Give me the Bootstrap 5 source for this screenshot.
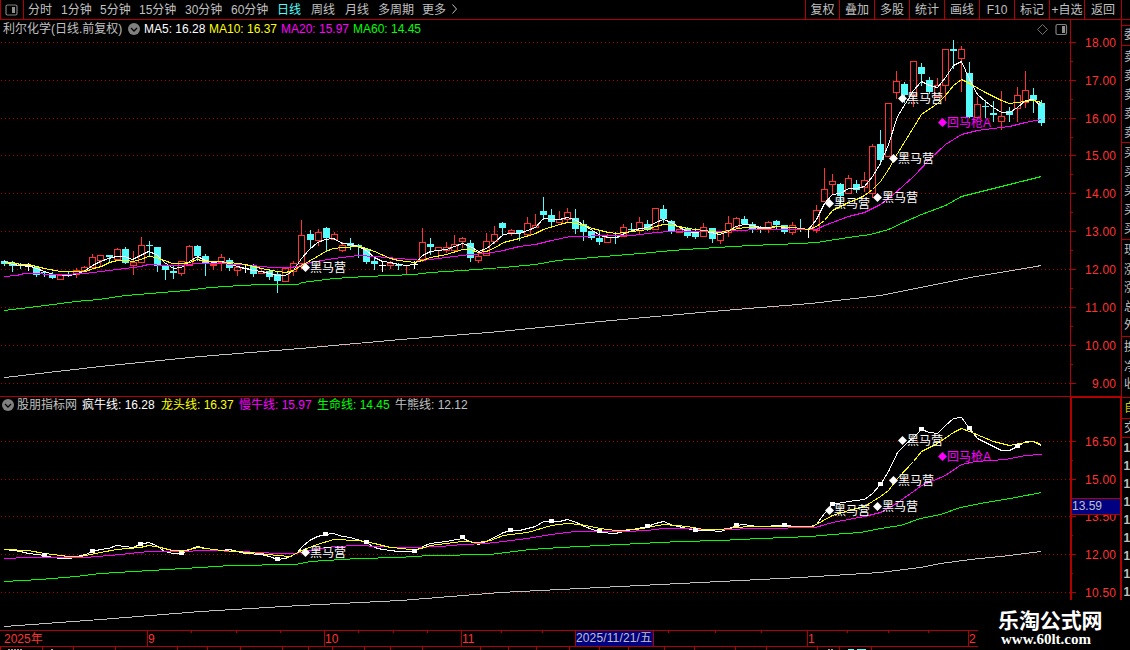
<!DOCTYPE html>
<html lang="zh-CN">
<head>
<meta charset="utf-8">
<title>利尔化学</title>
<link rel="stylesheet" href="https://cdn.jsdelivr.net/npm/bootstrap@5.3.0/dist/css/bootstrap.min.css">
<script src="https://cdn.jsdelivr.net/npm/bootstrap@5.3.0/dist/js/bootstrap.bundle.min.js"></script>
<style>
html,body{height:100%;overflow:hidden}
body{background:#000;color:#c0c0c0;font:12px/18px "Liberation Sans","Noto Sans CJK SC",sans-serif;width:1130px;height:650px}
.topbar{height:20px;border-bottom:1px solid #b00000;line-height:20px}
.panel-btn{width:24px;height:19px;border:1px solid #b00000;border-width:0 1px 0 1px}
.periods{padding-left:4px}
.p33{width:33px}.p34{width:34px}.p39{width:39px}.p44{width:44px}.p46{width:46px}.p30{width:30px}
.picked{color:#54fcfc}
.tool{width:35px;height:19px;border-left:1px solid #b00000;text-align:center}
.tool-first{width:34px}
.tool-last{width:37px}
.edge{width:9px;border-left:1px solid #b00000}
.stage{height:630px}
.legend-row{left:0;height:18px;z-index:2}
.legend-main{top:0}
.legend-sub{top:376px}
.c-w{color:#fff}.c-y{color:#ff0}.c-m{color:#f0f}.c-g{color:#0f0}
.n122{width:128px;padding-left:3px}.n16{width:16px}
.w65{width:65px}.w72{width:72px}.w78{width:78px}.w79{width:79px}
.s17{width:17px}.n65{width:65px}
svg{display:block}
svg text{font-family:"Liberation Sans","Noto Sans CJK SC",sans-serif;font-size:12px}
.brand{left:978px;top:580px;width:152px;height:50px;background:#000;color:#fff;padding:8px 0 0 20px}
.brand-name{font:700 21px/22px "Noto Sans CJK SC",sans-serif;letter-spacing:-.1px}
.brand-url{font:700 15px/18px "Liberation Serif",serif;padding-left:3px}
</style>
</head>
<body>
<header class="topbar d-flex text-nowrap">
  <div class="panel-btn d-flex align-items-center justify-content-center">
    <svg width="14" height="12" viewBox="0 0 14 12"><rect x="1" y="1" width="11" height="10" rx="1.5" fill="none" stroke="#808080" stroke-width="1.2"/><rect x="7" y="3" width="3" height="6" fill="#909090"/></svg>
  </div>
  <nav class="periods d-flex flex-grow-1">
    <span class="p33">分时</span><span class="p39">1分钟</span><span class="p39">5分钟</span><span class="p46">15分钟</span><span class="p46">30分钟</span><span class="p46">60分钟</span><span class="p34 picked">日线</span><span class="p34">周线</span><span class="p33">月线</span><span class="p44">多周期</span><span class="p30">更多</span>
    <svg width="6" height="18"><path d="M.5 4.5l4 4.5l-4 4.5" fill="none" stroke="#c0c0c0"/></svg>
  </nav>
  <span class="tool tool-first">复权</span><span class="tool">叠加</span><span class="tool">多股</span><span class="tool">统计</span><span class="tool">画线</span><span class="tool">F10</span><span class="tool">标记</span><span class="tool">+自选</span><span class="tool tool-last">返回</span><span class="edge"></span>
</header>
<main class="stage position-relative">
  <div class="legend-row legend-main position-absolute d-flex text-nowrap">
    <span class="n122">利尔化学(日线.前复权)</span>
    <span class="n16"><svg width="13" height="18"><circle cx="6" cy="9" r="6" fill="#808080"/><path d="M3 8l3 3l3-3" fill="none" stroke="#000" stroke-width="1.3"/></svg></span>
    <span class="w65 c-w">MA5: 16.28</span><span class="w72 c-y">MA10: 16.37</span><span class="w72 c-m">MA20: 15.97</span><span class="w72 c-g">MA60: 14.45</span>
  </div>
  <div class="legend-row legend-sub position-absolute d-flex text-nowrap">
    <span class="s17"><svg width="16" height="18"><circle cx="8" cy="9" r="6" fill="#808080"/><path d="M5 8l3 3l3-3" fill="none" stroke="#000" stroke-width="1.3"/></svg></span>
    <span class="n65">股朋指标网</span>
    <span class="w79 c-w">疯牛线: 16.28</span><span class="w78 c-y">龙头线: 16.37</span><span class="w78 c-m">慢牛线: 15.97</span><span class="w78 c-g">生命线: 14.45</span><span class="w78">牛熊线: 12.12</span>
  </div>
  <svg id="chart" width="1130" height="630" viewBox="0 20 1130 630"></svg>
  <div class="brand position-absolute text-nowrap">
    <div class="brand-name">乐淘公式网</div>
    <div class="brand-url">www.60lt.com</div>
  </div>
</main>
<script>
// Each candle: kind, wick top, body top, body bottom, wick bottom
const candles = `c260,261,264,265|c261,263,266,271|c263,265,266,268|w263,266,266,270|c267,267,275,276|c271,272,273,276|c272,274,278,278|r275,275,279,279|c272,275,276,276|r268,270,274,277
r266,267,270,270|r254,257,267,267|r255,255,260,265|c255,255,257,261|r248,249,259,259|c247,249,263,263|r251,262,265,274|r237,245,262,262|c241,245,246,255|c247,247,266,271
c265,266,270,279|c266,271,273,278|r261,261,273,275|r245,246,265,265|c245,246,256,260|c254,256,264,275|r262,264,265,269|r254,257,262,270|c258,260,268,270|r266,267,270,275
w264,268,268,272|c264,265,274,276|r268,271,273,273|c270,271,277,279|c272,274,281,292|r268,268,281,281|r261,263,271,275|r220,235,263,268|c230,234,240,247|r229,232,240,245
c227,228,238,251|r232,234,239,239|r242,245,250,251|c238,243,246,249|c244,245,247,257|c249,249,262,263|c257,261,264,269|w261,265,265,271|r261,263,265,268|c263,265,266,269
r265,265,265,274|w261,264,264,268|r228,242,259,261|c238,244,247,254|r247,247,250,258|r242,247,250,252|r235,244,250,252|r237,238,241,247|c240,243,258,261|r253,256,260,262
r233,241,255,255|r226,234,241,243|c222,223,228,235|r229,230,232,235|c230,230,233,240|r217,223,234,235|r214,225,227,227|c197,211,215,219|c209,215,222,226|r211,219,222,222
r208,212,219,221|c209,218,229,233|c220,224,232,240|c231,231,238,239|c231,238,242,244|r234,237,242,242|c232,237,238,243|r224,227,236,236|c223,229,230,231|r217,222,230,233
c220,224,230,230|r208,208,229,229|c205,209,219,222|c220,221,231,233|r229,229,232,232|c227,229,236,237|c228,231,237,238|r223,227,236,236|c228,228,239,242|r232,232,240,243
r216,223,232,236|r217,218,227,227|c216,219,224,224|c222,224,230,232|c226,227,229,232|r221,222,229,232|c220,221,225,229|c225,225,232,233|r222,225,232,234|c219,228,230,231
w228,229,229,237|r205,210,230,232|r168,189,201,201|r174,181,184,193|c183,184,196,203|r175,178,193,193|c180,184,190,192|r172,180,187,191|r144,146,193,197|c130,144,160,164
r103,103,156,156|r71,81,92,98|c82,84,95,102|r61,61,95,106|c63,67,74,85|c77,80,92,93|r78,85,96,96|r49,49,85,100|c40,49,51,68|r46,49,58,91
c62,73,117,117|r97,104,117,117|c100,106,107,117|c101,113,115,121|r91,116,121,129|c107,111,115,121|r87,95,108,121|r71,90,102,107|c88,95,100,112|c100,103,123,125`.split(/[|\n]/);

const lines = {
 '#fff': ['4,261 12,264 20,265 28,265 36,268 44,271 53,274 69,275 77,273 85,270 92,265 100,261 108,258 116,256 124,256 132,259 140,255 148,251 156,254 164,262 173,268 181,267 189,261 197,256 205,260 213,262 221,261 229,263 237,266 245,268 253,270 261,271 269,273 277,275 285,275 293,270 301,258 309,249 317,242 325,239 333,238 342,243 350,244 358,246 366,250 374,257 382,261 390,262 398,264 406,265 414,264 422,255 430,251 438,250 446,249 454,246 462,243 470,246 478,251 486,248 495,241 503,234 511,233 519,233 527,230 535,227 543,218 551,219 559,219 567,217 576,220 584,225 592,230 600,235 608,237 616,237 624,233 632,230 640,228 647,227 655,222 663,219 671,222 679,227 687,231 695,232 703,231 711,232 719,234 728,231 735,226 744,224 752,225 760,227 768,227 776,226 784,227 792,227 800,228 808,229 816,219 824,203 832,194 840,193 848,188 856,188 864,186 872,176 880,163 888,144 897,116 905,103 913,90 921,81 929,85 937,87 945,77 953,65 961,61 969,79 977,94 985,101 993,107 1001,112 1009,112 1017,107 1025,100 1033,99 1041,106',
 '4,549 12,550 20,551 28,553 36,554 44,555 53,557 61,558 69,558 77,556 85,554 92,551 100,549 108,548 116,545 124,546 132,547 140,544 148,542 156,545 164,551 173,553 181,553 189,549 197,546 205,548 221,550 229,549 237,551 245,553 261,554 269,556 277,559 285,558 296,553 302,546 309,540 317,536 325,534 333,533 342,536 350,537 366,542 374,547 382,549 398,551 414,551 422,546 430,543 446,541 462,538 470,541 478,544 486,541 503,532 511,530 519,530 535,526 543,521 559,521 567,519 576,522 584,526 592,529 600,532 615,533 623,531 632,529 647,526 655,523 663,521 673,525 687,528 695,530 708,530 720,531 737,525 743,524 757,526 784,525 808,527 816,524 824,513 832,504 848,501 864,499 872,493 880,484 888,471 897,452 905,444 913,437 921,429 929,432 937,433 945,425 953,418 961,417 969,428 977,438 985,442 993,446 1001,450 1009,450 1017,446 1025,441 1033,441 1041,445'],
 '#f0f': ['4,276 16,275 24,273 60,274 85,273 100,271 125,268 140,266 148,264 165,265 181,265 197,263 213,263 240,264 262,266 270,267 290,267 302,265 310,262 333,258 358,255 374,256 398,258 422,260 438,258 470,254 486,253 503,250 519,246 535,244 551,240 570,236 611,235 632,235 655,232 671,231 720,231 735,230 760,229 816,229 824,225 832,222 848,216 864,212 880,204 893,194 913,176 929,159 945,144 961,134 977,130 993,128 1009,126 1025,122 1041,119',
 '4,558 28,557 85,557 120,554 148,551 180,551 205,550 240,551 278,553 295,553 310,550 333,546 358,545 398,547 414,547 440,546 462,544 485,543 503,541 527,538 551,534 575,531 625,531 647,530 663,528 720,529 760,528 815,527 832,522 848,519 864,516 880,512 893,505 913,491 921,485 945,475 961,464 975,461 1005,459 1025,455 1041,454'],
 '#ff0': ['4,262 12,262 20,264 28,264 36,266 44,268 60,271 85,271 93,268 101,266 109,262 117,260 125,260 133,261 140,259 148,256 156,257 164,260 172,263 181,263 189,262 197,259 205,261 213,261 229,262 245,264 261,268 277,271 285,272 293,270 301,265 317,256 325,251 333,248 342,247 358,246 366,248 374,251 390,258 398,260 414,262 422,260 430,257 446,254 462,249 470,249 478,252 486,251 495,247 503,242 511,240 519,238 535,233 543,229 559,224 567,222 576,223 584,225 592,228 608,232 616,233 632,231 647,229 655,226 663,224 679,226 687,228 695,229 711,231 719,232 728,230 744,227 768,228 776,226 792,227 808,229 816,226 824,220 832,210 840,206 848,202 856,199 864,195 872,189 880,181 888,169 897,153 913,127 921,114 937,103 945,95 953,85 961,79 969,83 985,92 1001,100 1009,103 1025,101 1033,100 1041,102',
 '4,549 28,550 44,553 68,556 80,556 100,552 116,549 140,547 148,545 160,547 172,550 185,550 197,547 221,550 250,552 277,555 290,556 301,550 317,544 333,539 358,540 374,543 390,547 403,548 414,550 430,545 446,543 462,541 478,542 490,540 503,535 527,532 551,525 567,523 580,524 600,528 615,530 636,529 647,527 663,524 687,526 703,529 720,529 735,527 751,526 805,526 812,526 832,515 848,510 864,506 880,496 888,490 897,478 913,461 921,451 937,443 953,432 961,428 969,431 993,441 1009,445 1025,442 1033,441 1041,444'],
 '#0f0': ['4,310 20,308 45,305 75,301 98,299 125,295 150,293 185,290 210,287 240,285 262,284 297,284 302,282 333,278 366,276 414,274 430,272 462,270 503,267 535,264 557,260 592,257 615,255 640,253 672,250 700,248 750,245 800,243 816,242 848,237 870,234 888,229 905,221 921,214 945,205 961,196 977,192 1001,186 1041,176',
 '4,581 40,579 75,576 100,573 150,570 200,567 230,565 295,564 310,561 358,558 398,557 430,555 490,554 530,549 560,547 600,545 640,543 680,541 720,540 760,538 810,536 832,534 860,532 880,528 900,525 920,518 940,514 960,507 985,502 1010,498 1041,492'],
 '#c0c0c0': ['4,377 100,366 200,356 300,348 400,339 500,331 600,321 700,312 760,307 810,303 880,295 920,287 970,277 1041,265',
 '4,626 100,619 200,611 300,605 400,600 500,592 600,587 700,582 800,577 880,572 920,567 940,563 970,559 1000,556 1041,551']
};
const R = '#b00000';
let s = '';
const box = (x,y,w,h,f) => s += `<rect x="${x}" y="${y}" width="${w}" height="${h}" fill="${f}" shape-rendering="crispEdges"/>`;
const txt = (x,y,t,f,extra='') => s += `<text x="${x}" y="${y}" fill="${f}" ${extra}>${t}</text>`;

// price grids and their scale
const scaleMain = [42,80,118,155,193,231,269,307,345,383], scaleSub = [441,479,516,554,592];
const price = (y,v) => { const t = v.toFixed(2); txt(t.length > 4 ? 1085 : 1092, y+5, t, '#ff3232', `textLength="${t.length > 4 ? 31 : 24}"`); };
[...scaleMain,...scaleSub].forEach(y => {
  s += `<path d="M1 ${y+.5}H1070" stroke="${R}" stroke-dasharray="1 3" shape-rendering="crispEdges"/>`;
  box(1071,y,5,1,R);
});
scaleMain.forEach((y,i) => { if (i<9) box(1071,y+19,2,1,R); price(y,18-i); });
scaleSub.forEach((y,i) => { if (i<4) box(1071,y+19,2,1,R); price(y,16.5-i*1.5); });

// candles
candles.forEach((d,i) => {
  const [h,t,b,l] = d.slice(1).split(',').map(Number), x = Math.round(4 + i*8.04), k = d[0];
  if (k === 'r') {
    box(x,h,1,Math.max(t-h,0),'#ff3232'); box(x,b,1,l-b+1,'#ff3232');
    if (b > t) s += `<rect x="${x-2.5}" y="${t+.5}" width="6" height="${b-t}" fill="none" stroke="#ff3232" shape-rendering="crispEdges"/>`;
    else box(x-3,t,7,1,'#ff3232');
  } else {
    const f = k === 'c' ? '#54fcfc' : '#fff';
    box(x,h,1,l-h+1,f); box(x-3,t,7,Math.max(b-t,1),f);
  }
});
for (const c in lines) lines[c].forEach(p =>
  s += `<polyline points="${p}" transform="translate(.5 .5)" fill="none" stroke="${c}" shape-rendering="crispEdges"/>`);
[[44,555],[92,551],[140,544],[181,553],[277,559],[325,534],[366,542],[414,551],[462,537],[510,530],[551,521],[599,531],[647,526],[695,530],[736,525],[784,525],[832,504],[880,484],[921,429],[969,428],[1017,446]].forEach(([x,y]) => box(x-2,y-2,5,4,'#fff'));

// signal marks
const mark = (x,y,t,f) => { s += `<path d="M${x-4} ${y+.5}l4.5-4.5l4.5 4.5l-4.5 4.5z" fill="${f}"/>`; txt(x+5,y+5,t,f); };
[[305,267],[829,203],[877,197],[893,158],[902,98],[305,552],[829,510],[877,506],[893,480],[902,440]].forEach(([x,y]) => mark(x,y,'黑马营','#fff'));
mark(942,122,'回马枪A','#f0f'); mark(942,456,'回马枪A','#f0f');

// frames
box(0,396,1121,1,R); box(1070,20,1,377,R); box(1121,20,1,580,R);
box(1070,397,2,203,R); box(1120,397,2,203,R); box(1070,397,52,1,R);
box(1072,498,48,16,'#000080'); box(1071,498,50,1,R); box(1071,514,50,1,R);
txt(1072,510,'13.59','#c0c0c0','textLength="30"');
[25,45,142,239,336,397,418,437].forEach(y => box(1121,y,9,1,R));

// quote panel, cut by the window edge
[['委',35],['卖',57],['卖',76],['卖',95],['卖',114],['卖',133],['买',153],['买',172],['买',191],['买',210],['买',229],['现',250],['涨',270],['涨',288],['总',307],['外',325],['换',347],['净',367],['收',384],['交',428]].forEach(([t,y]) => txt(1124,y+4,t,'#c0c0c0'));
txt(1124,412,'自','#c8c800');
for (let y = 447; y < 600; y += 18) txt(1123.5,y+4.5,'1','#c0c0c0','font-weight="700"');

// header icons at the right
s += `<path d="M1042.5 24.5l5 5l-5 5l-5-5z" fill="none" stroke="#707070"/><rect x="1056" y="24.5" width="10.5" height="10" rx="1.5" fill="none" stroke="#808080" stroke-width="1.2"/><rect x="1062" y="26" width="3" height="7" fill="#909090"/>`;

// time axis
box(0,630,978,1,R); box(0,646,978,1,R);
[147,324,461,807,968].forEach(x => box(x,630,1,16,R));
[191,236,280,358,393,427,501,542,668,715,761,847,888,928].forEach(x => box(x,631,1,2,R));
[0,42,73,115,177,207,240,282,308,332,364,390,422,480,508,536,569,599,628,664,694,735,766,817,839,871].forEach(x => box(x,647,1,3,R));
[8,11,14,17,20,51,828,831].forEach(x => box(x,649,2,1,'#a0a0a0'));
box(848,649,6,1,'#54fcfc'); box(857,649,9,1,'#54fcfc');
[[4,'2025年'],[148,'9'],[325,'10'],[462,'11'],[808,'1'],[969,'2']].forEach(([x,t]) => txt(x,643,t,'#ff3232'));
box(575,631,79,15,R); box(576,631,77,15,'#000080');
txt(576,642,'2025/11/21/五','#c0c0c0','textLength="76"');
document.getElementById('chart').innerHTML = s;
</script>
</body>
</html>
